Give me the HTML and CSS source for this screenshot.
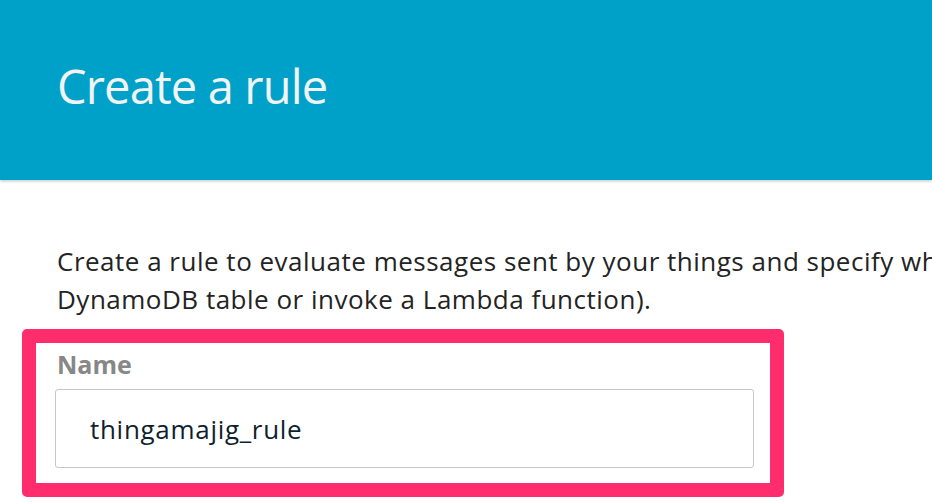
FILE: index.html
```html
<!DOCTYPE html>
<html>
<head>
<meta charset="utf-8">
<link rel="stylesheet" href="styles.css">
</head>
<body>
<header class="hero">
  <h1 class="title">Create a rule</h1>
</header>
<main class="content">
  <p class="intro">Create a rule to evaluate messages sent by your things and specify what to do when a message is received (for example, write data to a<br>DynamoDB table or invoke a Lambda function).</p>
  <div class="highlight">
    <label class="label" for="name">Name</label>
    <div class="field" id="name">thingamajig_rule</div>
  </div>
</main>
</body>
</html>
```
FILE: styles.css
```css
html, body {
  margin: 0;
  padding: 0;
  overflow: hidden;
  background: #fff;
  font-family: "Open Sans", "Noto Sans", sans-serif;
}
.hero {
  height: 180px;
  background: #00a1c9;
  box-shadow: 0 1px 3px rgba(0,0,0,0.25);
  padding-left: 57px;
  box-sizing: border-box;
  display: flex;
  align-items: flex-start;
}
.title {
  margin: 56px 0 0 0;
  font-size: 47px;
  font-weight: 400;
  line-height: 60px;
  color: #f2f3f3;
  letter-spacing: -0.85px;
}
.content {
  padding: 0 0 0 22px;
}
.intro {
  margin: 62px 0 0 35px;
  font-size: 26px;
  line-height: 38px;
  letter-spacing: 0.5px;
  color: #232323;
  white-space: nowrap;
}
.highlight {
  margin-top: 11px;
  width: 762px;
  box-sizing: border-box;
  border: 14px solid #ff2d6e;
  border-radius: 5px;
  padding: 3px 16px 15px 19px;
  display: flex;
  flex-direction: column;
}
.label {
  font-size: 25px;
  font-weight: 700;
  color: #878787;
  line-height: 36px;
  margin-left: 2px;
  margin-bottom: 7px;
}
.field {
  height: 79px;
  box-sizing: border-box;
  border: 1px solid #c6c6c6;
  border-radius: 3px;
  padding-left: 34px;
  display: flex;
  align-items: center;
  font-size: 26px;
  letter-spacing: 0.7px;
  color: #0f1f2e;
}
```
